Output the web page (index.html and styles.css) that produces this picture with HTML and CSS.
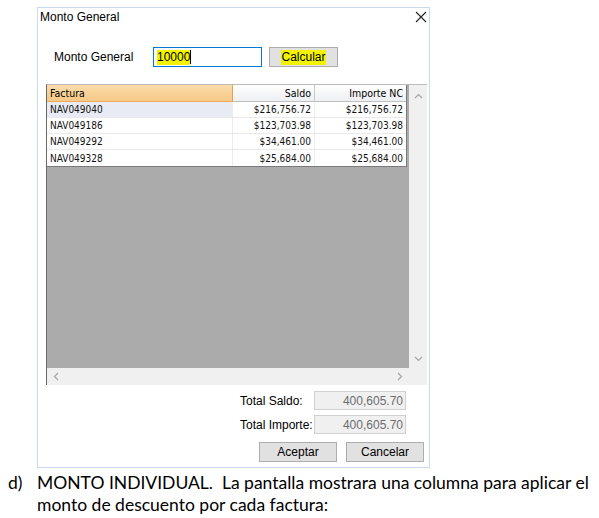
FILE: index.html
```html
<!DOCTYPE html>
<html lang="es">
<head>
<meta charset="utf-8">
<title>Monto General</title>
<link rel="stylesheet" href="styles.css">
</head>
<body>
<div class="page">
  <div class="dialog">
    <div class="titlebar">
      <span class="title">Monto General</span>
      <svg class="close" width="12" height="12" viewBox="0 0 12 12"><path d="M1 1 L11 11 M11 1 L1 11" stroke="#222" stroke-width="1.1" fill="none"/></svg>
    </div>
    <div class="monto-row">
      <span class="monto-label">Monto General</span>
      <div class="input"><span class="hl">10000</span><span class="caret"></span></div>
      <div class="btn calc"><span class="hl">Calcular</span></div>
    </div>
    <div class="grid">
      <div class="viewport">
        <div class="table">
          <div class="tr head">
            <div class="th c1 sel">Factura</div>
            <div class="th c2">Saldo</div>
            <div class="th c3">Importe NC</div>
          </div>
          <div class="tr">
            <div class="td c1 cur">NAV049040</div>
            <div class="td c2">$216,756.72</div>
            <div class="td c3">$216,756.72</div>
          </div>
          <div class="tr">
            <div class="td c1">NAV049186</div>
            <div class="td c2">$123,703.98</div>
            <div class="td c3">$123,703.98</div>
          </div>
          <div class="tr">
            <div class="td c1">NAV049292</div>
            <div class="td c2">$34,461.00</div>
            <div class="td c3">$34,461.00</div>
          </div>
          <div class="tr">
            <div class="td c1">NAV049328</div>
            <div class="td c2">$25,684.00</div>
            <div class="td c3">$25,684.00</div>
          </div>
        </div>
      </div>
      <div class="vscroll">
        <svg width="9" height="6" viewBox="0 0 9 6"><polyline points="1,5 4.5,1.5 8,5" stroke="#a6a6a6" stroke-width="1.2" fill="none"/></svg>
        <svg width="9" height="6" viewBox="0 0 9 6"><polyline points="1,1 4.5,4.5 8,1" stroke="#a6a6a6" stroke-width="1.2" fill="none"/></svg>
      </div>
      <div class="hscroll">
        <svg width="6" height="9" viewBox="0 0 6 9"><polyline points="5,1 1.5,4.5 5,8" stroke="#a6a6a6" stroke-width="1.2" fill="none"/></svg>
        <svg width="6" height="9" viewBox="0 0 6 9"><polyline points="1,1 4.5,4.5 1,8" stroke="#a6a6a6" stroke-width="1.2" fill="none"/></svg>
      </div>
      <div class="corner"></div>
    </div>
    <div class="totals">
      <div class="total-row">
        <span class="total-label">Total Saldo:</span>
        <div class="total-box">400,605.70</div>
      </div>
      <div class="total-row">
        <span class="total-label">Total Importe:</span>
        <div class="total-box">400,605.70</div>
      </div>
    </div>
    <div class="actions">
      <div class="btn act">Aceptar</div>
      <div class="btn act">Cancelar</div>
    </div>
  </div>
  <div class="doc">
    <span class="marker">d)</span>
    <p class="doc-text">MONTO INDIVIDUAL.&nbsp; La pantalla mostrara una columna para aplicar el<br>monto de descuento por cada factura:</p>
  </div>
</div>
</body>
</html>
```

FILE: styles.css
```css
* { box-sizing: border-box; }
html, body { margin: 0; padding: 0; background: #ffffff; }
body { width: 599px; height: 518px; overflow: hidden; }

.page { padding-top: 7px; }

.dialog {
  margin-left: 37px;
  width: 393px;
  height: 461px;
  border: 1px solid #c9d8ef;
  background: #ffffff;
  font-family: "Liberation Sans", Arial, sans-serif;
  font-size: 12px;
  color: #000;
  display: flex;
  flex-direction: column;
}

.titlebar {
  height: 18px;
  display: flex;
  align-items: center;
  justify-content: space-between;
  padding: 0 2px 0 2px;
}
.title { font-size: 12px; line-height: 14px; }
.close { display: block; }

.monto-row {
  display: flex;
  align-items: center;
  margin-top: 21px;
  padding-left: 16px;
  height: 20px;
}
.monto-label { width: 99px; font-size: 12px; }
.input {
  width: 109px;
  height: 20px;
  border: 1px solid #0078d7;
  display: flex;
  align-items: center;
  padding-left: 3px;
}
.hl { background: #f3f300; line-height: 15px; }
.caret { width: 1px; height: 14px; background: #000; }
.btn {
  background: #e1e1e1;
  border: 1px solid #adadad;
  display: flex;
  align-items: center;
  justify-content: center;
  height: 20px;
}
.calc { width: 69px; margin-left: 7px; }

.grid {
  margin: 17px 0 0 8px;
  width: 381px;
  height: 301px;
  display: grid;
  grid-template-columns: 1fr 18px;
  grid-template-rows: 1fr 17px;
  border-top: 1px solid #bcbcbc;
  border-left: 1px solid #6a6a6a;
  font-family: "DejaVu Sans Condensed", "DejaVu Sans", sans-serif;
  font-size: 10px;
}
.viewport {
  background: #ababab;
  overflow: hidden;
}
.table {
  width: 360px;
  background: #ffffff;
  border-right: 1px solid #7a7a7a;
  border-bottom: 1px solid #7a7a7a;
}
.tr { display: flex; height: 16px; border-bottom: 1px solid #e9e9e9; }
.tr:last-child { border-bottom: none; }
.tr.head { height: 17px; border-bottom: none; font-size: 10.5px; }
.th, .td { display: flex; align-items: center; padding: 0 3px; white-space: nowrap; }
.c1 { width: 186px; }
.c2 { width: 82px; justify-content: flex-end; }
.c3 { width: 91px; justify-content: flex-end; }
.th {
  background: linear-gradient(#ffffff, #eeeff2);
  border-right: 1px solid #c9c9c9;
  border-bottom: 1px solid #c0c0c0;
  color: #000;
}
.th.c3 { border-right: none; }
.th.sel {
  background: linear-gradient(#fbdcaa, #f7c886);
  border-right: 1px solid #e9a04f;
  border-bottom: 1px solid #eeaa5c;
}
.td { border-right: 1px solid #ececec; color: #111; }
.td.c3 { border-right: none; }
.td.cur { background: #e8ebf4; }

.vscroll {
  background: #f0f0f0;
  display: flex;
  flex-direction: column;
  justify-content: space-between;
  align-items: center;
  padding: 8px 0 6px;
}
.hscroll {
  background: #f0f0f0;
  display: flex;
  justify-content: space-between;
  align-items: center;
  padding: 0 6px;
}
.vscroll svg, .hscroll svg { display: block; }
.corner { background: #f0f0f0; }

.totals {
  margin-top: 6px;
  display: flex;
  flex-direction: column;
  gap: 5px;
  padding-left: 202px;
}
.total-row { display: flex; align-items: center; height: 19px; }
.total-label { width: 74px; }
.total-box {
  width: 92px;
  height: 19px;
  background: #f0f0f0;
  border: 1px solid #d0d0d0;
  color: #6d6d6d;
  text-align: right;
  padding: 2px 2px 0 0;
}

.actions {
  margin-top: 8px;
  display: flex;
  gap: 9px;
  padding-left: 221px;
}
.act { width: 78px; }

.doc {
  display: flex;
  margin-top: 4px;
  padding-left: 8px;
  font-family: Lato, "Liberation Sans", sans-serif;
  font-size: 17.5px;
  line-height: 22px;
  color: #000;
}
.marker { width: 29px; flex: none; }
.doc-text { margin: 0; white-space: nowrap; }
```
